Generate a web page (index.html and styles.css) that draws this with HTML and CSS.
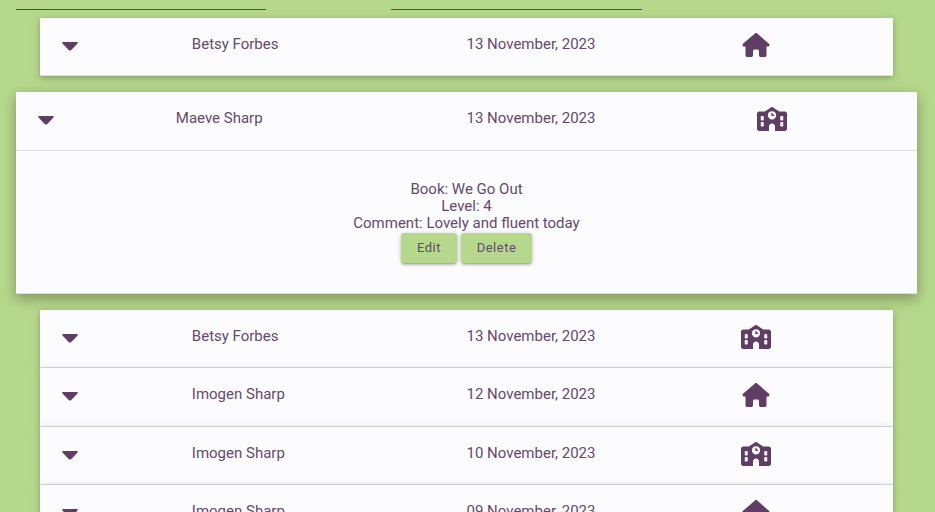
FILE: index.html
```html
<!DOCTYPE html>
<html lang="en">
<head>
<meta charset="utf-8">
<title>Reading log</title>
<link rel="stylesheet" href="styles.css">
</head>
<body>
<svg class="sprite" aria-hidden="true">
  <symbol id="caret" viewBox="0 0 30 24"><path d="M8 9h14q.8 0 .8.700 0 .600-.500 1.100L16.300 17q-1.300 1.200-2.600 0L7.700 10.800q-.500-.500-.500-1.100 0-.700.800-.700z"/></symbol>
  <symbol id="home" viewBox="0 0 576 512"><path d="M575.8 255.5c0 18-15 32.1-32 32.1h-32l.7 160.2c0 2.7-.2 5.4-.5 8.1V472c0 22.1-17.9 40-40 40H392c-22.1 0-40-17.9-40-40V384c0-17.7-14.3-32-32-32H256c-17.7 0-32 14.3-32 32v88c0 22.1-17.9 40-40 40H104c-22.1 0-40-17.9-40-40V287.6H32c-18 0-32-14-32-32.1 0-9 3-17 10-24L266.4 8c7-7 15-8 22-8s15 2 21 7L564.8 231.5c8 7 12 15 11 24z"/></symbol>
  <symbol id="school" viewBox="0 0 640 512"><path fill-rule="evenodd" d="M337.8 5.4C327-1.8 313-1.8 302.2 5.4L166.3 96H48C21.5 96 0 117.5 0 144V464c0 26.5 21.5 48 48 48H256V416c0-35.3 28.7-64 64-64s64 28.7 64 64v96H592c26.5 0 48-21.5 48-48V144c0-26.5-21.5-48-48-48H473.7L337.8 5.4zM96 192h32c8.8 0 16 7.2 16 16v64c0 8.8-7.2 16-16 16H96c-8.8 0-16-7.2-16-16V208c0-8.8 7.2-16 16-16zm400 16c0-8.8 7.2-16 16-16h32c8.8 0 16 7.2 16 16v64c0 8.8-7.2 16-16 16H512c-8.8 0-16-7.2-16-16V208zM96 320h32c8.8 0 16 7.2 16 16v64c0 8.8-7.2 16-16 16H96c-8.8 0-16-7.2-16-16V336c0-8.8 7.2-16 16-16zm400 16c0-8.8 7.2-16 16-16h32c8.8 0 16 7.2 16 16v64c0 8.8-7.2 16-16 16H512c-8.8 0-16-7.2-16-16V336zM232 176a88 88 0 1 1 176 0a88 88 0 1 1-176 0zm88-48c-8.8 0-16 7.2-16 16v32c0 8.8 7.2 16 16 16h32c8.8 0 16-7.2 16-16s-7.2-16-16-16H336V144c0-8.8-7.2-16-16-16z"/></symbol>
</svg>
<div class="filters">
  <div class="field"></div>
  <div class="field"></div>
</div>
<ul class="collapsible">
  <li><div class="header"><svg class="icon"><use href="#caret"/></svg><span>Betsy Forbes</span><span>13 November, 2023</span><svg class="icon"><use href="#home"/></svg></div></li>
  <li class="active">
    <div class="header"><svg class="icon"><use href="#caret"/></svg><span>Maeve Sharp</span><span>13 November, 2023</span><svg class="icon"><use href="#school"/></svg></div>
    <div class="body">
      <div>Book: We Go Out</div>
      <div>Level: 4</div>
      <div>Comment: Lovely and fluent today</div>
      <div class="actions"><button class="btn edit">Edit</button><button class="btn delete">Delete</button></div>
    </div>
  </li>
  <li><div class="header"><svg class="icon"><use href="#caret"/></svg><span>Betsy Forbes</span><span>13 November, 2023</span><svg class="icon"><use href="#school"/></svg></div></li>
  <li><div class="header"><svg class="icon"><use href="#caret"/></svg><span>Imogen Sharp</span><span>12 November, 2023</span><svg class="icon"><use href="#home"/></svg></div></li>
  <li><div class="header"><svg class="icon"><use href="#caret"/></svg><span>Imogen Sharp</span><span>10 November, 2023</span><svg class="icon"><use href="#school"/></svg></div></li>
  <li><div class="header"><svg class="icon"><use href="#caret"/></svg><span>Imogen Sharp</span><span>09 November, 2023</span><svg class="icon"><use href="#home"/></svg></div></li>
</ul>
</body>
</html>
```
FILE: styles.css
```css
* { box-sizing: border-box; }
body {
  margin: 0;
  height: 512px;
  overflow: hidden;
  background: #b6d88c;
  color: #65496a;
  font: 15px/17px Roboto, sans-serif;
}
.sprite { display: none; }
.filters {
  display: grid;
  grid-template-columns: 250px 251px;
  column-gap: 125px;
  height: 10px;
  padding-left: 16px;
}
.field { border-bottom: 1px solid #5f3d64; }
.collapsible {
  list-style: none;
  margin: 7.5px 18px 0 16px;
  padding: 0;
}
.collapsible li {
  margin: 0 24px;
  background: #fcfcff;
  box-shadow: 0 2px 5px 0 rgba(0, 0, 0, .16), 0 2px 10px 0 rgba(0, 0, 0, .12);
}
.collapsible li.active {
  margin: 16px 0;
  box-shadow: 0 5px 11px 0 rgba(0, 0, 0, .18), 0 4px 15px 0 rgba(0, 0, 0, .15);
}
.header {
  display: grid;
  grid-template-columns: 2fr 4fr 4fr 2fr;
  align-items: start;
  height: 58.5px;
  padding: 15px 14.5px 0;
  border-bottom: 1px solid #ddd;
}
.header span { padding-top: 3px; }
.icon { width: 30px; height: 24px; fill: #5f3d64; }
.body {
  height: 143px;
  padding-top: 30px;
  border-bottom: 1px solid #ddd;
  text-align: center;
}
.actions {
  display: flex;
  justify-content: center;
  gap: 4px;
  margin-top: 1.5px;
}
.btn {
  height: 30px;
  padding: 0;
  border: 0;
  border-radius: 3px;
  background: #b6d88c;
  color: #65496a;
  font: 13px/28px Roboto, sans-serif;
  letter-spacing: .5px;
  box-shadow: 0 2px 2px 0 rgba(0, 0, 0, .14), 0 3px 1px -2px rgba(0, 0, 0, .12), 0 1px 5px 0 rgba(0, 0, 0, .2);
}
.edit { width: 56px; }
.delete { width: 71px; }
```
